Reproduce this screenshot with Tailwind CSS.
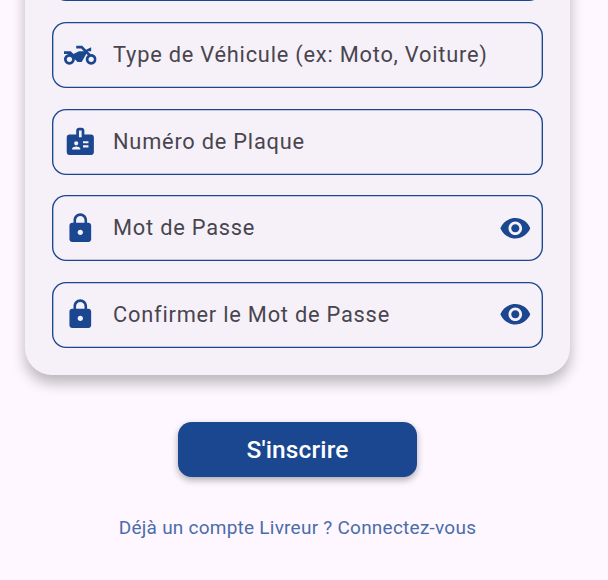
<!DOCTYPE html>
<html lang="fr">
<head>
<meta charset="utf-8">
<title>Inscription Livreur</title>
<script src="https://cdn.jsdelivr.net/npm/@tailwindcss/browser@4"></script>
</head>
<body class="h-[580px] overflow-hidden bg-[#fef7ff] font-['Roboto',sans-serif]">
<svg class="hidden">
  <symbol id="moto" viewBox="0 0 24 24"><path d="M20,11c-0.18,0-0.36,0.03-0.53,0.05L17.41,9H20V6l-3.72,1.86L13.41,5H9v2h3.59l2,2H11l-4,2L5,9H0v2h4c-2.21,0-4,1.79-4,4c0,2.21,1.79,4,4,4c2.21,0,4-1.79,4-4l2,2h3l3.49-6.1l1.01,1.01C16.59,12.64,16,13.75,16,15c0,2.21,1.79,4,4,4c2.21,0,4-1.79,4-4C24,12.79,22.21,11,20,11z M4,17c-1.1,0-2-0.9-2-2c0-1.1,0.9-2,2-2c1.1,0,2,0.9,2,2C6,16.1,5.1,17,4,17z M20,17c-1.1,0-2-0.9-2-2c0-1.1,0.9-2,2-2s2,0.9,2,2C22,16.1,21.1,17,20,17z"/></symbol>
  <symbol id="badge" viewBox="0 0 24 24"><path fill-rule="evenodd" d="M20,7h-5V4c0-1.1-0.9-2-2-2h-2C9.9,2,9,2.9,9,4v3H4C2.9,7,2,7.9,2,9v11c0,1.1,0.9,2,2,2h16c1.1,0,2-0.9,2-2V9C22,7.9,21.1,7,20,7z M9,12c0.83,0,1.5,0.67,1.5,1.5S9.83,15,9,15s-1.5-0.67-1.5-1.5S8.17,12,9,12z M12,18H6v-0.75c0-1,2-1.5,3-1.5s3,0.5,3,1.5V18z M13,9h-2V4h2V9z M18,16.5h-4V15h4V16.5z M18,13.5h-4V12h4V13.5z"/></symbol>
  <symbol id="lock" viewBox="0 0 24 24"><path d="M18 8h-1V6c0-2.76-2.24-5-5-5S7 3.24 7 6v2H6c-1.1 0-2 .9-2 2v10c0 1.1.9 2 2 2h12c1.1 0 2-.9 2-2V10c0-1.1-.9-2-2-2zm-6 9c-1.1 0-2-.9-2-2s.9-2 2-2 2 .9 2 2-.9 2-2 2zm3.1-9H8.9V6c0-1.71 1.39-3.1 3.1-3.1 1.71 0 3.1 1.39 3.1 3.1v2z"/></symbol>
  <symbol id="eye" viewBox="0 0 24 24"><path d="M12 4.5C7 4.5 2.73 7.61 1 12c1.73 4.39 6 7.5 11 7.5s9.27-3.11 11-7.5c-1.73-4.39-6-7.5-11-7.5zM12 17c-2.76 0-5-2.24-5-5s2.24-5 5-5 5 2.24 5 5-2.24 5-5 5zm0-8c-1.66 0-3 1.34-3 3s1.34 3 3 3 3-1.34 3-3-1.34-3-3-3z"/></symbol>
</svg>
<main class="flex w-[595px] flex-col items-center">
  <form class="-mt-[64.8px] flex h-[440.2px] w-[545.5px] flex-col gap-[20.6px] rounded-[27px] bg-[#f6f1f8] px-[27.5px] text-[21.8px] leading-[30px] tracking-[0.78px] text-[#49454f] shadow-[0_8px_14px_0_rgba(0,0,0,0.27)]">
    <div class="h-[65.7px] shrink-0 rounded-[14px] shadow-[inset_0_0_0_1.36px_#1a478f]"></div>
    <label class="mt-[0.6px] flex h-[66px] shrink-0 items-center rounded-[14px] pl-[11.7px] shadow-[inset_0_0_0_1.36px_#1a478f]">
      <svg class="size-[32.6px] fill-[#1a478f]"><use href="#moto"/></svg>
      <span class="ml-[16.5px] whitespace-nowrap">Type de Véhicule (ex: Moto, Voiture)</span>
    </label>
    <label class="flex h-[66px] shrink-0 items-center rounded-[14px] pl-[11.7px] shadow-[inset_0_0_0_1.36px_#1a478f]">
      <svg class="size-[32.6px] fill-[#1a478f]"><use href="#badge"/></svg>
      <span class="ml-[16.5px]">Numéro de Plaque</span>
    </label>
    <label class="flex h-[66px] shrink-0 items-center rounded-[14px] pr-[11px] pl-[11.7px] shadow-[inset_0_0_0_1.36px_#1a478f]">
      <svg class="size-[32.6px] fill-[#1a478f]"><use href="#lock"/></svg>
      <span class="ml-[16.5px] grow">Mot de Passe</span>
      <svg class="size-[32.6px] fill-[#1a478f]"><use href="#eye"/></svg>
    </label>
    <label class="flex h-[66px] shrink-0 items-center rounded-[14px] pr-[11px] pl-[11.7px] shadow-[inset_0_0_0_1.36px_#1a478f]">
      <svg class="mb-px size-[32.6px] fill-[#1a478f]"><use href="#lock"/></svg>
      <span class="ml-[16.5px] grow">Confirmer le Mot de Passe</span>
      <svg class="mb-px size-[32.6px] fill-[#1a478f]"><use href="#eye"/></svg>
    </label>
  </form>
  <button class="mt-[46.6px] h-[55px] w-[239px] rounded-[13.6px] bg-[#1a478f] pt-px text-[24.5px] font-medium tracking-[0.14px] text-white shadow-[0_3px_7px_0_rgba(0,0,0,0.32)]">S'inscrire</button>
  <a class="mt-[38px] text-[19px] leading-[26px] tracking-[0.24px] whitespace-nowrap text-[#4b6da9]">Déjà un compte Livreur ? Connectez-vous</a>
</main>
</body>
</html>
